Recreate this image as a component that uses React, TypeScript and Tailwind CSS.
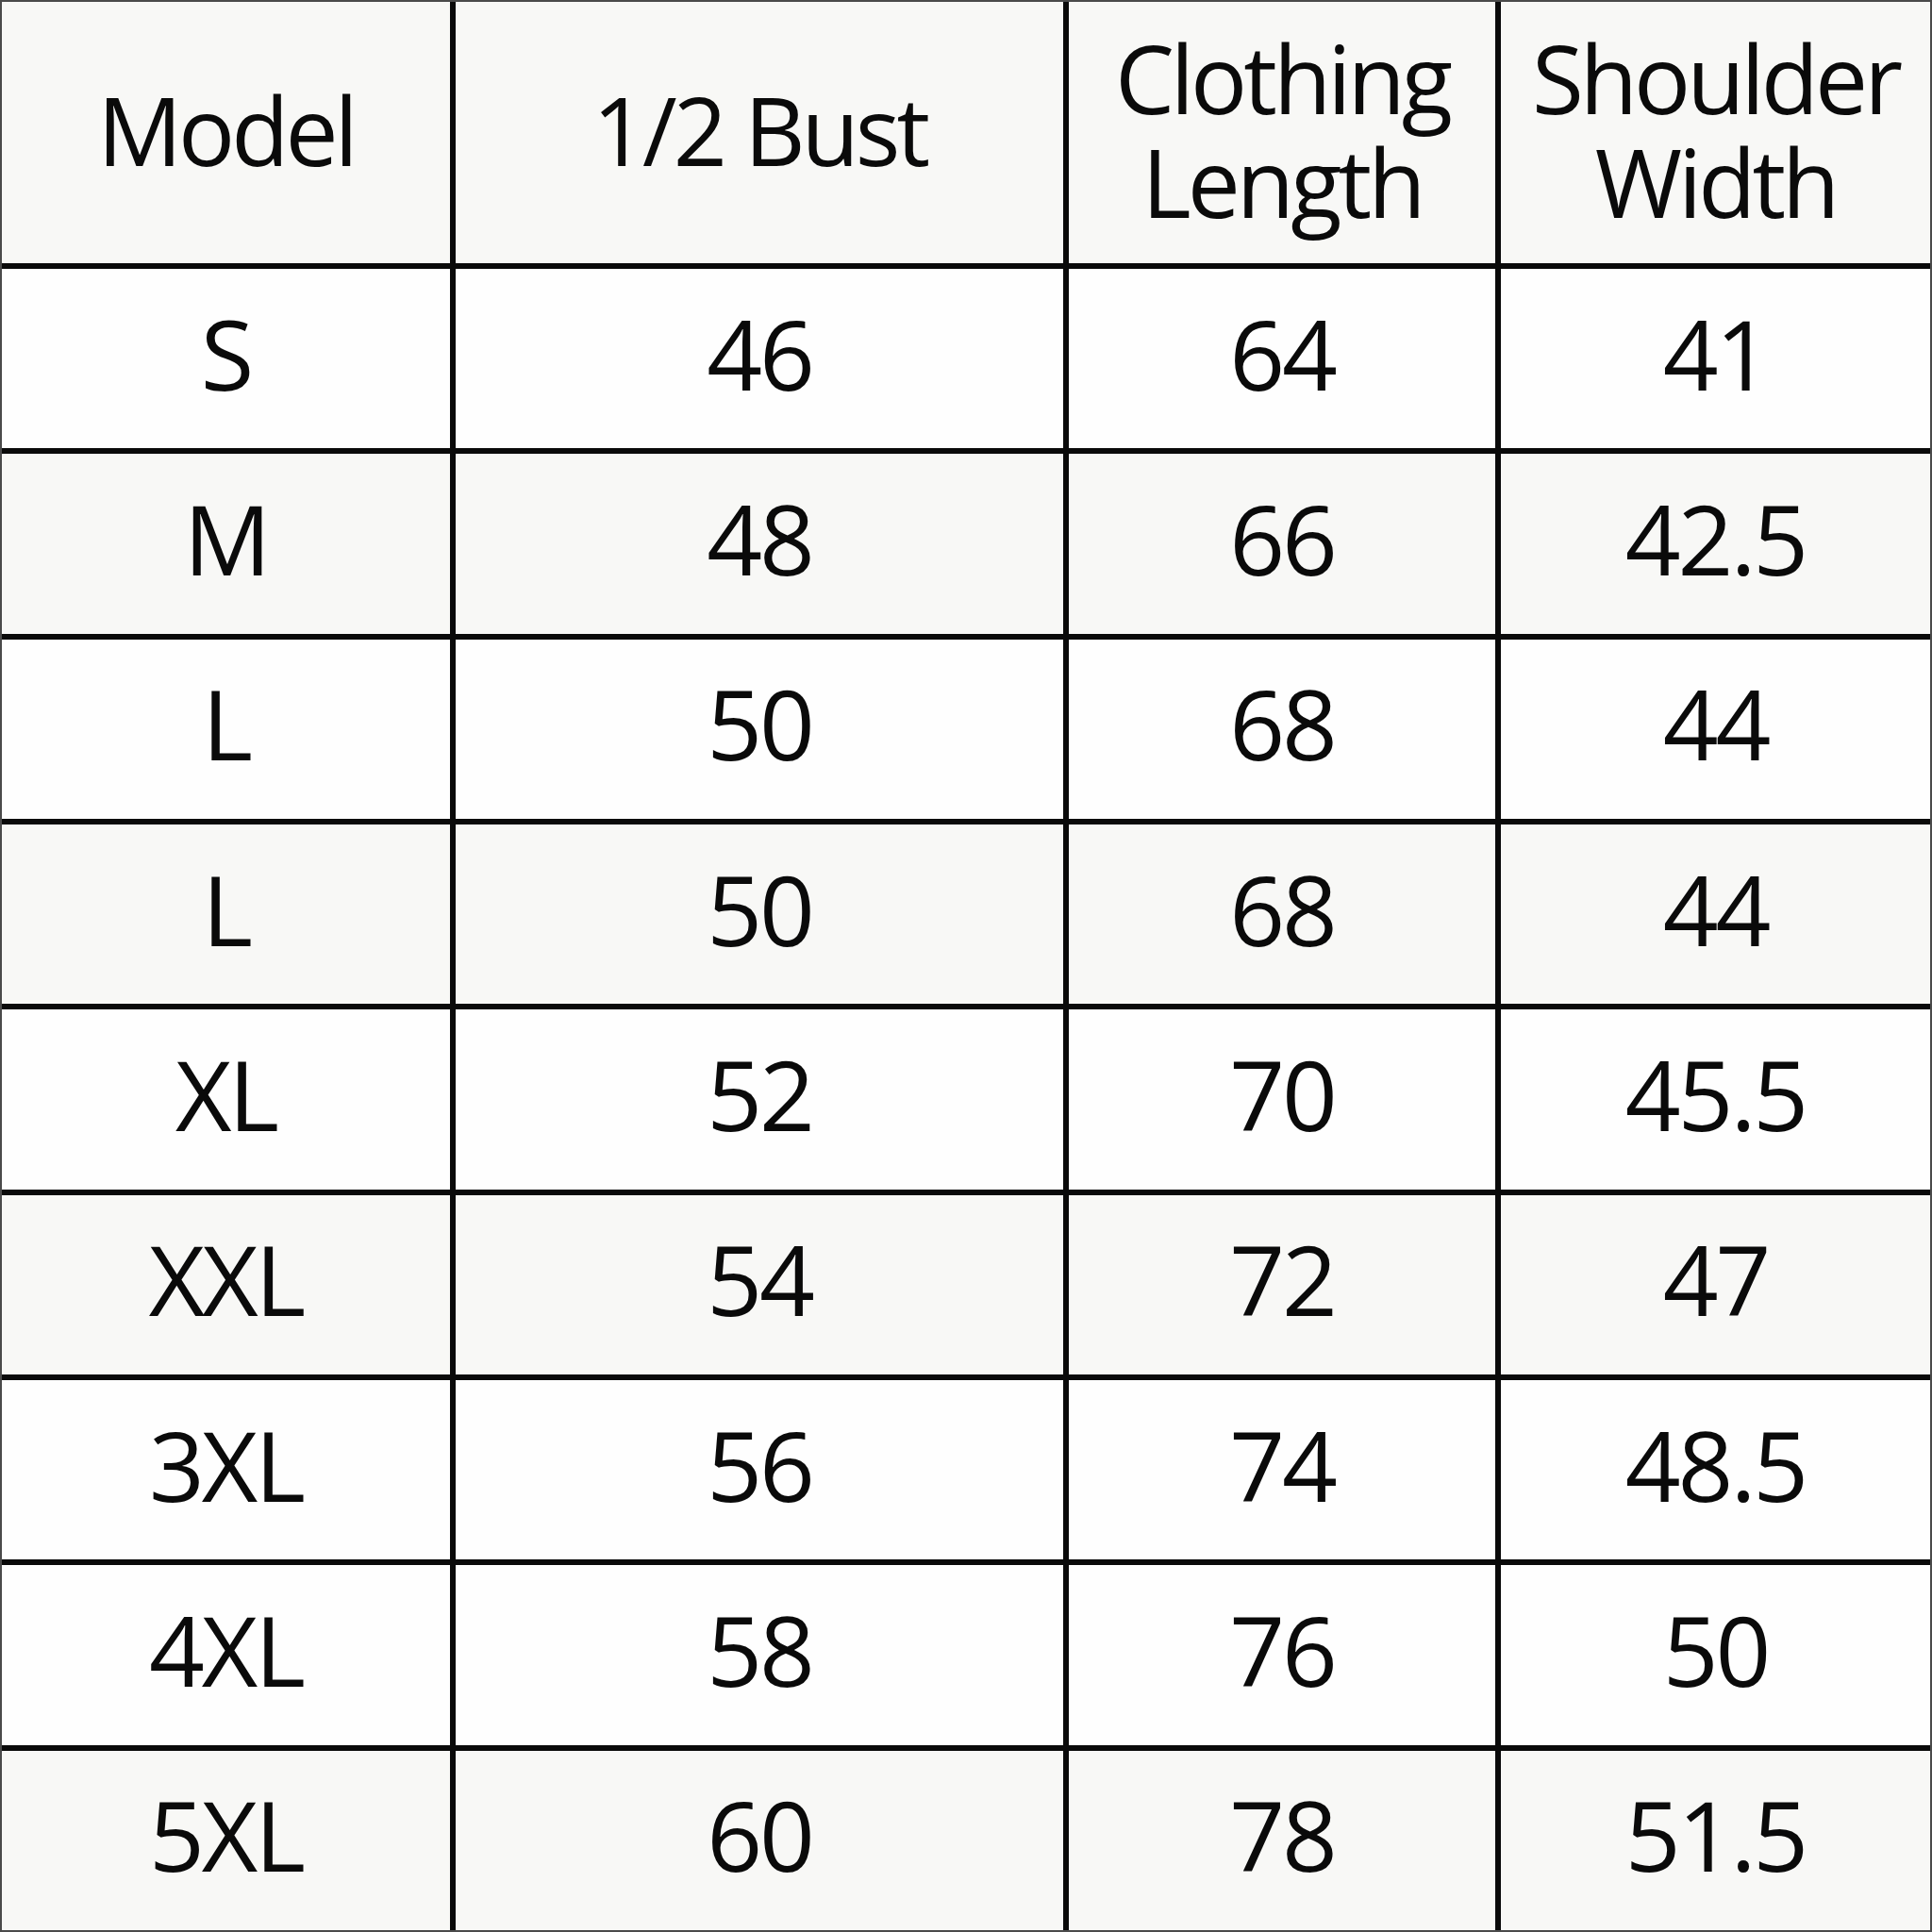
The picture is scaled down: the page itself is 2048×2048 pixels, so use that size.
const HEADERS = [
  ["Model"],
  ["1/2 Bust"],
  ["Clothing", "Length"],
  ["Shoulder", "Width"],
];

const ROWS: [string, string, string, string, boolean][] = [
  ["S", "46", "64", "41", false],
  ["M", "48", "66", "42.5", true],
  ["L", "50", "68", "44", false],
  ["L", "50", "68", "44", true],
  ["XL", "52", "70", "45.5", false],
  ["XXL", "54", "72", "47", true],
  ["3XL", "56", "74", "48.5", false],
  ["4XL", "58", "76", "50", false],
  ["5XL", "60", "78", "51.5", true],
];

export default function App() {
  return (
    <div
      className="h-[2048px] w-[2048px] border-2 border-[#4a4a4a] bg-[#0a0a0a] text-[#0a0a0a]"
      style={{ fontFamily: '"Open Sans", "Noto Sans", sans-serif' }}
    >
      <div className="grid h-full w-full grid-cols-[475px_644px_452px_1fr] grid-rows-[277px_repeat(9,1fr)] gap-[6px]">
        {HEADERS.map((lines, i) => (
          <div
            key={i}
            className="flex flex-col items-center justify-center bg-[#f8f8f6] pb-2 text-[100px] leading-[110px] tracking-[-0.04em]"
          >
            {lines.map((line) => (
              <span key={line}>{line}</span>
            ))}
          </div>
        ))}
        {ROWS.map(([size, bust, length, shoulder, shaded], r) =>
          [size, bust, length, shoulder].map((value, c) => (
            <div
              key={`${r}-${c}`}
              className={`flex items-center justify-center pb-3 text-[103px] leading-none tracking-[-0.03em] ${
                shaded ? "bg-[#f8f8f6]" : "bg-[#fefefe]"
              }`}
            >
              {value}
            </div>
          ))
        )}
      </div>
    </div>
  );
}
